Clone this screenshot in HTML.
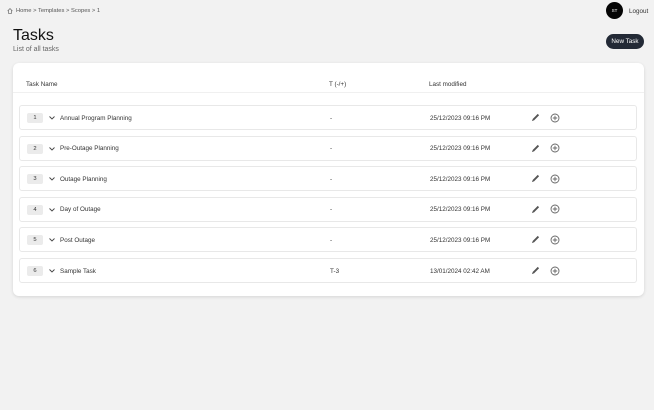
<!DOCTYPE html>
<html><head><meta charset="utf-8"><style>
*{box-sizing:border-box;margin:0;padding:0}
body{width:654px;height:410px;background:#f2f2f2;font-family:"Liberation Sans",sans-serif;position:relative;overflow:hidden;color:#222}
.abs{position:absolute}
.bc{left:16px;top:8px;font-size:5.8px;color:#555}
h1{position:absolute;left:13px;top:27px;font-size:16px;font-weight:normal;color:#111}
.sub{left:13px;top:46px;font-size:7px;color:#666}
.av{left:606px;top:2px;width:17px;height:17px;border-radius:50%;background:#050505;color:#fff;font-size:4.5px;display:flex;align-items:center;justify-content:center}
.lo{left:629px;top:8px;font-size:6.3px;color:#333}
.btn{left:606px;top:34px;width:38px;height:15px;border-radius:8px;background:#232a36;color:#fff;font-size:6.3px;display:flex;align-items:center;justify-content:center}
.card{left:13px;top:63px;width:631px;height:233px;background:#fff;border-radius:6px;box-shadow:0 1px 3px rgba(0,0,0,.12)}
.hd{font-size:6.3px;color:#333;top:81px}
.line{left:13px;top:92px;width:631px;height:1px;background:#f0f0f0}
.row{left:19px;width:618px;height:25px;border:1px solid #e8e8e8;border-radius:3px;background:#fff;font-size:6.3px;color:#333}
.row span{position:absolute;top:8.5px}
.badge{position:absolute;left:7px;top:7px;width:16px;height:10px;background:#ebebeb;border-radius:2px;font-size:5.8px;text-align:center;line-height:10px}
</style></head><body>
<svg class="abs" style="left:7px;top:8px" width="6" height="6" viewBox="0 0 10 10"><path d="M1 5 L5 1 L9 5 M2.5 4 V9 H7.5 V4" fill="none" stroke="#777" stroke-width="1.3"/></svg>
<div class="abs bc">Home &gt; Templates &gt; Scopes &gt; 1</div>
<h1>Tasks</h1>
<div class="abs sub">List of all tasks</div>
<div class="abs av">ST</div>
<div class="abs lo">Logout</div>
<div class="abs btn">New Task</div>
<div class="abs card"></div>
<div class="abs hd" style="left:26px">Task Name</div>
<div class="abs hd" style="left:329px">T (-/+)</div>
<div class="abs hd" style="left:429px">Last modified</div>
<div class="abs line"></div>

<div class="abs row" style="top:105px"><div class="badge">1</div><svg class="abs" style="left:29px;top:10px" width="6" height="4" viewBox="0 0 6 4"><path d="M0.5 0.5 L3 3 L5.5 0.5" fill="none" stroke="#444" stroke-width="0.9"/></svg><span style="left:40px">Annual Program Planning</span><span style="left:310px">-</span><span style="left:410px">25/12/2023 09:16 PM</span><svg class="abs" style="left:511px;top:7px" width="9" height="9" viewBox="0 0 10 10"><path d="M1 9 L2 6.5 L7.5 1 L9 2.5 L3.5 8 Z" fill="#555"/></svg><svg class="abs" style="left:530px;top:6.5px" width="10" height="10" viewBox="0 0 10 10"><circle cx="5" cy="5" r="4" fill="none" stroke="#666" stroke-width="0.9"/><path d="M5 2.8V7.2M2.8 5H7.2" stroke="#666" stroke-width="0.9"/></svg></div>
<div class="abs row" style="top:135.6px"><div class="badge">2</div><svg class="abs" style="left:29px;top:10px" width="6" height="4" viewBox="0 0 6 4"><path d="M0.5 0.5 L3 3 L5.5 0.5" fill="none" stroke="#444" stroke-width="0.9"/></svg><span style="left:40px">Pre-Outage Planning</span><span style="left:310px">-</span><span style="left:410px">25/12/2023 09:16 PM</span><svg class="abs" style="left:511px;top:7px" width="9" height="9" viewBox="0 0 10 10"><path d="M1 9 L2 6.5 L7.5 1 L9 2.5 L3.5 8 Z" fill="#555"/></svg><svg class="abs" style="left:530px;top:6.5px" width="10" height="10" viewBox="0 0 10 10"><circle cx="5" cy="5" r="4" fill="none" stroke="#666" stroke-width="0.9"/><path d="M5 2.8V7.2M2.8 5H7.2" stroke="#666" stroke-width="0.9"/></svg></div>
<div class="abs row" style="top:166.2px"><div class="badge">3</div><svg class="abs" style="left:29px;top:10px" width="6" height="4" viewBox="0 0 6 4"><path d="M0.5 0.5 L3 3 L5.5 0.5" fill="none" stroke="#444" stroke-width="0.9"/></svg><span style="left:40px">Outage Planning</span><span style="left:310px">-</span><span style="left:410px">25/12/2023 09:16 PM</span><svg class="abs" style="left:511px;top:7px" width="9" height="9" viewBox="0 0 10 10"><path d="M1 9 L2 6.5 L7.5 1 L9 2.5 L3.5 8 Z" fill="#555"/></svg><svg class="abs" style="left:530px;top:6.5px" width="10" height="10" viewBox="0 0 10 10"><circle cx="5" cy="5" r="4" fill="none" stroke="#666" stroke-width="0.9"/><path d="M5 2.8V7.2M2.8 5H7.2" stroke="#666" stroke-width="0.9"/></svg></div>
<div class="abs row" style="top:196.8px"><div class="badge">4</div><svg class="abs" style="left:29px;top:10px" width="6" height="4" viewBox="0 0 6 4"><path d="M0.5 0.5 L3 3 L5.5 0.5" fill="none" stroke="#444" stroke-width="0.9"/></svg><span style="left:40px">Day of Outage</span><span style="left:310px">-</span><span style="left:410px">25/12/2023 09:16 PM</span><svg class="abs" style="left:511px;top:7px" width="9" height="9" viewBox="0 0 10 10"><path d="M1 9 L2 6.5 L7.5 1 L9 2.5 L3.5 8 Z" fill="#555"/></svg><svg class="abs" style="left:530px;top:6.5px" width="10" height="10" viewBox="0 0 10 10"><circle cx="5" cy="5" r="4" fill="none" stroke="#666" stroke-width="0.9"/><path d="M5 2.8V7.2M2.8 5H7.2" stroke="#666" stroke-width="0.9"/></svg></div>
<div class="abs row" style="top:227.4px"><div class="badge">5</div><svg class="abs" style="left:29px;top:10px" width="6" height="4" viewBox="0 0 6 4"><path d="M0.5 0.5 L3 3 L5.5 0.5" fill="none" stroke="#444" stroke-width="0.9"/></svg><span style="left:40px">Post Outage</span><span style="left:310px">-</span><span style="left:410px">25/12/2023 09:16 PM</span><svg class="abs" style="left:511px;top:7px" width="9" height="9" viewBox="0 0 10 10"><path d="M1 9 L2 6.5 L7.5 1 L9 2.5 L3.5 8 Z" fill="#555"/></svg><svg class="abs" style="left:530px;top:6.5px" width="10" height="10" viewBox="0 0 10 10"><circle cx="5" cy="5" r="4" fill="none" stroke="#666" stroke-width="0.9"/><path d="M5 2.8V7.2M2.8 5H7.2" stroke="#666" stroke-width="0.9"/></svg></div>
<div class="abs row" style="top:258px"><div class="badge">6</div><svg class="abs" style="left:29px;top:10px" width="6" height="4" viewBox="0 0 6 4"><path d="M0.5 0.5 L3 3 L5.5 0.5" fill="none" stroke="#444" stroke-width="0.9"/></svg><span style="left:40px">Sample Task</span><span style="left:310px">T-3</span><span style="left:410px">13/01/2024 02:42 AM</span><svg class="abs" style="left:511px;top:7px" width="9" height="9" viewBox="0 0 10 10"><path d="M1 9 L2 6.5 L7.5 1 L9 2.5 L3.5 8 Z" fill="#555"/></svg><svg class="abs" style="left:530px;top:6.5px" width="10" height="10" viewBox="0 0 10 10"><circle cx="5" cy="5" r="4" fill="none" stroke="#666" stroke-width="0.9"/><path d="M5 2.8V7.2M2.8 5H7.2" stroke="#666" stroke-width="0.9"/></svg></div>
</body></html>
